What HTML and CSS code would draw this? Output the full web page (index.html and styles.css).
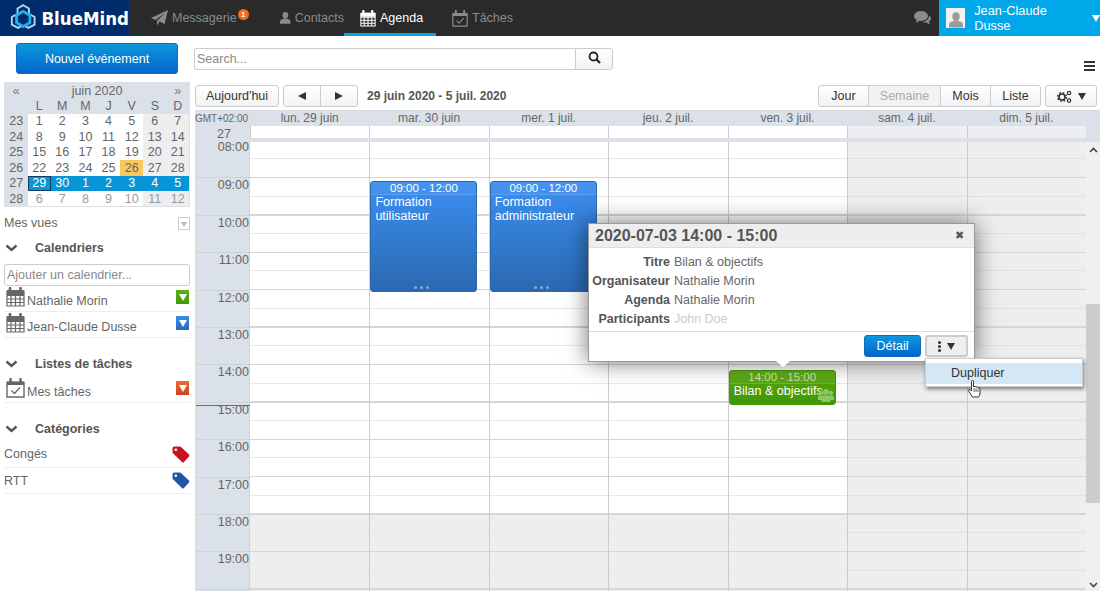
FILE: index.html
```html
<!DOCTYPE html>
<html lang="fr">
<head>
    <meta charset="UTF-8">
    <title>BlueMind - Agenda</title>
    <link rel="stylesheet" href="styles.css">
</head>
<body>
    <svg class="defs" width="0" height="0">
        <symbol id="cal" viewBox="0 0 19 20">
            <path d="M1 4h17v15H1z M1 8.5h17 M1 12h17 M1 15.500h17 M5 8.500V19 M9.500 8.500V19 M14 8.500V19" fill="none" stroke="currentColor" stroke-width="1.200"/>
            <path d="M1 3h17v5H1z" fill="currentColor"/>
            <path d="M4 1v4 M14.500 1v4" stroke="currentColor" stroke-width="2.600" stroke-linecap="round"/>
        </symbol>
        <symbol id="task" viewBox="0 0 19 20">
            <path d="M1 4.500h17v14.500H1z" fill="none" stroke="currentColor" stroke-width="1.400"/>
            <path d="M1 3.500h17v3.500H1z" fill="currentColor"/>
            <path d="M4.500 1v4 M14.500 1v4" stroke="currentColor" stroke-width="2.400" stroke-linecap="round"/>
            <path d="M5.500 12.500l3 3 5.500-6" fill="none" stroke="currentColor" stroke-width="1.300"/>
        </symbol>
        <symbol id="tag" viewBox="0 0 18 17">
            <path d="M0.500 2.500Q0.500 0.500 2.500 0.500H7.500Q8.500 0.500 9.200 1.200L17 8.500Q17.800 9.500 17 10.500L12 16Q11 17 10 16L1.200 7.500Q0.500 6.800 0.500 6Z" fill="currentColor"/>
            <circle cx="3.800" cy="3.800" r="1.300" fill="#fff"/>
        </symbol>
        <symbol id="person" viewBox="0 0 14 16">
            <ellipse cx="7" cy="4.500" rx="3.700" ry="4.300" fill="currentColor"/>
            <path d="M0 15.500V12.500Q0 10 3 9.500L5 8.500H9L11 9.500Q14 10 14 12.500V15.500Z" fill="currentColor"/>
        </symbol>
    </svg>

    <header class="topbar">
        <a class="logo">
            <svg width="30" height="30" viewBox="0 0 30 30">
                <path d="M15 1.500L21 5V10.500L27 14V22L20.500 25.500L15 22.500L9.500 25.500L3 22V14L9 10.500V5Z" fill="none" stroke="#a8dcf2" stroke-width="2"/>
                <path d="M15 8L22 12V20L15 24L8 20V12Z" fill="#012c6c" stroke="#26aeea" stroke-width="3"/>
            </svg>
            <span class="logo-text">BlueMind</span>
        </a>
        <nav class="tabs">
            <a class="tab tab-mail">
                <svg width="17" height="16" viewBox="0 0 17 16"><path d="M17 0L13.500 14L8.500 11.500L6 15.500V11L14 3L4.500 10L0 8Z" fill="currentColor"/></svg>
                Messagerie<span class="badge">1</span>
            </a>
            <a class="tab tab-contacts">
                <svg width="14" height="16"><use href="#person"/></svg>
                Contacts
            </a>
            <a class="tab tab-agenda active">
                <svg width="16" height="17"><use href="#cal"/></svg>
                Agenda
            </a>
            <a class="tab tab-tasks">
                <svg width="16" height="17"><use href="#task"/></svg>
                Tâches
            </a>
        </nav>
        <svg class="chat" width="17" height="14" viewBox="0 0 17 14">
            <ellipse cx="7" cy="5" rx="7" ry="5" fill="currentColor"/>
            <path d="M3 8L2 12L7 9Z" fill="currentColor"/>
            <path d="M15.500 4.500Q17 6 17 7.500Q17 9.500 15 10.500L16 13.500L12 11.500Q9.500 11.500 8 11Q14 11 15.500 4.500Z" fill="currentColor"/>
        </svg>
        <div class="user">
            <span class="avatar"><svg width="14" height="16"><use href="#person"/></svg></span>
            <span class="user-name">Jean-Claude Dusse</span>
            <span class="user-arrow"></span>
        </div>
    </header>

    <div class="page">
        <aside class="sidebar">
            <div class="new-wrap"><button class="btn-primary btn-new">Nouvel événement</button></div>

            <table class="mini">
                <tr class="mini-title"><td class="nav">«</td><td colspan="6">juin 2020</td><td class="nav">»</td></tr>
                <tr class="mini-days"><td></td><td>L</td><td>M</td><td>M</td><td>J</td><td>V</td><td>S</td><td>D</td></tr>
                <tr><th>23</th><td>1</td><td>2</td><td>3</td><td>4</td><td>5</td><td class="we">6</td><td class="we">7</td></tr>
                <tr><th>24</th><td>8</td><td>9</td><td>10</td><td>11</td><td>12</td><td class="we">13</td><td class="we">14</td></tr>
                <tr><th>25</th><td>15</td><td>16</td><td>17</td><td>18</td><td>19</td><td class="we">20</td><td class="we">21</td></tr>
                <tr><th>26</th><td>22</td><td>23</td><td>24</td><td>25</td><td class="today">26</td><td class="we">27</td><td class="we">28</td></tr>
                <tr class="sel"><th>27</th><td class="focus">29</td><td>30</td><td>1</td><td>2</td><td>3</td><td>4</td><td>5</td></tr>
                <tr class="other"><th>28</th><td>6</td><td>7</td><td>8</td><td>9</td><td>10</td><td class="we">11</td><td class="we">12</td></tr>
            </table>

            <div class="views">Mes vues <span class="views-btn"></span></div>

            <h3 class="side-title first"><svg class="chev" width="13" height="8" viewBox="0 0 13 8"><path d="M1.500 1.500L6.500 6L11.500 1.500" fill="none" stroke="currentColor" stroke-width="2.400"/></svg>Calendriers</h3>
            <input class="add-cal" placeholder="Ajouter un calendrier...">
            <div class="side-row cal-row">
                <svg class="row-icon" width="19" height="20"><use href="#cal"/></svg>
                <span class="row-label">Nathalie Morin</span>
                <span class="swatch green"></span>
            </div>
            <div class="side-row cal-row">
                <svg class="row-icon" width="19" height="20"><use href="#cal"/></svg>
                <span class="row-label">Jean-Claude Dusse</span>
                <span class="swatch blue"></span>
            </div>

            <h3 class="side-title"><svg class="chev" width="13" height="8" viewBox="0 0 13 8"><path d="M1.500 1.500L6.500 6L11.500 1.500" fill="none" stroke="currentColor" stroke-width="2.400"/></svg>Listes de tâches</h3>
            <div class="side-row cal-row">
                <svg class="row-icon" width="19" height="20"><use href="#task"/></svg>
                <span class="row-label">Mes tâches</span>
                <span class="swatch orange"></span>
            </div>

            <h3 class="side-title"><svg class="chev" width="13" height="8" viewBox="0 0 13 8"><path d="M1.500 1.500L6.500 6L11.500 1.500" fill="none" stroke="currentColor" stroke-width="2.400"/></svg>Catégories</h3>
            <div class="side-row tag-row">
                <span class="tag-label">Congés</span>
                <svg class="tag red" width="18" height="17"><use href="#tag"/></svg>
            </div>
            <div class="side-row tag-row">
                <span class="tag-label">RTT</span>
                <svg class="tag navy" width="18" height="17"><use href="#tag"/></svg>
            </div>
        </aside>

        <main class="main">
            <div class="search-bar">
                <input class="search" placeholder="Search...">
                <button class="btn search-btn">
                    <svg width="13" height="13" viewBox="0 0 13 13"><circle cx="5.500" cy="5.500" r="4" fill="none" stroke="#222" stroke-width="1.800"/><path d="M8.500 8.500L12 12" stroke="#222" stroke-width="2.200"/></svg>
                </button>
                <span class="burger"></span>
            </div>

            <div class="toolbar">
                <button class="btn btn-today">Aujourd'hui</button>
                <div class="group">
                    <button class="btn btn-nav"><span class="tri-left"></span></button>
                    <button class="btn btn-nav"><span class="tri-right"></span></button>
                </div>
                <span class="range">29 juin 2020 - 5 juil. 2020</span>
                <div class="group group-views">
                    <button class="btn btn-jour">Jour</button>
                    <button class="btn btn-semaine">Semaine</button>
                    <button class="btn btn-mois">Mois</button>
                    <button class="btn btn-liste">Liste</button>
                </div>
                <button class="btn btn-settings">
                    <svg width="15" height="13" viewBox="0 0 15 13">
                        <circle cx="5" cy="7" r="3" fill="none" stroke="#333" stroke-width="1.600"/>
                        <circle cx="5" cy="7" r="4.300" fill="none" stroke="#333" stroke-width="1.600" stroke-dasharray="1.700 1.700"/>
                        <circle cx="12" cy="3" r="1.700" fill="none" stroke="#333" stroke-width="1.200"/>
                        <circle cx="12" cy="10.500" r="1.700" fill="none" stroke="#333" stroke-width="1.200"/>
                    </svg>
                    <span class="tri-down"></span>
                </button>
            </div>

            <section class="calendar">
                <div class="cal-head">
                    <div class="tz">GMT+02:00</div>
                    <div class="dow">lun. 29 juin</div>
                    <div class="dow">mar. 30 juin</div>
                    <div class="dow">mer. 1 juil.</div>
                    <div class="dow">jeu. 2 juil.</div>
                    <div class="dow">ven. 3 juil.</div>
                    <div class="dow">sam. 4 juil.</div>
                    <div class="dow">dim. 5 juil.</div>
                    <div class="wk">27</div>
                    <div class="allday"></div>
                    <div class="allday"></div>
                    <div class="allday"></div>
                    <div class="allday"></div>
                    <div class="allday"></div>
                    <div class="allday off"></div>
                    <div class="allday off"></div>
                </div>

                <div class="cal-body">
                    <div class="cal-grid">
                        <div class="hours">
                            <div class="hour">08:00</div>
                            <div class="hour">09:00</div>
                            <div class="hour">10:00</div>
                            <div class="hour">11:00</div>
                            <div class="hour">12:00</div>
                            <div class="hour">13:00</div>
                            <div class="hour">14:00</div>
                            <div class="hour">15:00</div>
                            <div class="hour">16:00</div>
                            <div class="hour">17:00</div>
                            <div class="hour">18:00</div>
                            <div class="hour">19:00</div>
                            <div class="hour">20:00</div>
                            <span class="now"></span>
                        </div>
                        <div class="day"></div>
                        <div class="day">
                            <div class="event event-blue event-morning">
                                <div class="event-time">09:00 - 12:00</div>
                                <div class="event-title">Formation utilisateur</div>
                                <span class="event-dots"></span>
                            </div>
                        </div>
                        <div class="day">
                            <div class="event event-blue event-morning">
                                <div class="event-time">09:00 - 12:00</div>
                                <div class="event-title">Formation administrateur</div>
                                <span class="event-dots"></span>
                            </div>
                        </div>
                        <div class="day"></div>
                        <div class="day">
                            <div class="event event-green">
                                <div class="event-time">14:00 - 15:00</div>
                                <div class="event-title">Bilan &amp; objectifs</div>
                                <svg class="event-people" width="16" height="13" viewBox="0 0 16 13">
                                    <circle cx="3" cy="4" r="2.200" fill="currentColor"/>
                                    <circle cx="13" cy="4" r="2.200" fill="currentColor"/>
                                    <circle cx="8" cy="3" r="3" fill="currentColor"/>
                                    <path d="M0 11V8Q0 6.500 2 6.500H14Q16 6.500 16 8V11H12.500V13H3.500V11Z" fill="currentColor"/>
                                </svg>
                            </div>
                        </div>
                        <div class="day weekend"></div>
                        <div class="day weekend"></div>
                    </div>
                    <div class="scrollbar">
                        <svg width="9" height="6" viewBox="0 0 9 6"><path d="M1 5L4.500 1.500L8 5" fill="none" stroke="#444" stroke-width="1.600"/></svg>
                        <span class="thumb"></span>
                        <svg class="scroll-down" width="9" height="6" viewBox="0 0 9 6"><path d="M1 1L4.500 4.500L8 1" fill="none" stroke="#444" stroke-width="1.600"/></svg>
                    </div>
                </div>
            </section>
        </main>
    </div>

    <div class="popover">
        <div class="pop-head">
            <span class="pop-title">2020-07-03 14:00 - 15:00</span>
            <span class="pop-close">✖</span>
        </div>
        <div class="pop-body">
            <div class="pop-label">Titre</div><div>Bilan &amp; objectifs</div>
            <div class="pop-label">Organisateur</div><div>Nathalie Morin</div>
            <div class="pop-label">Agenda</div><div>Nathalie Morin</div>
            <div class="pop-label">Participants</div><div class="muted">John Doe</div>
        </div>
        <div class="pop-foot">
            <button class="btn-primary btn-detail">Détail</button>
            <button class="btn btn-more">
                <span class="kebab"></span>
                <span class="tri-down"></span>
            </button>
        </div>
        <span class="pop-arrow"></span>
    </div>

    <div class="menu">
        <div class="menu-item">Dupliquer</div>
    </div>
    <svg class="hand" width="13" height="18" viewBox="0 0 13 18">
        <path d="M3.500 1.500Q3.500 0.500 4.500 0.500Q5.500 0.500 5.500 1.500V7L6 6.500Q7.500 6 8 7Q9.500 6.500 10 7.800Q11.500 7.500 12 9V13Q12 15 10.500 17H4.500L1 11.500Q0 10 1 9.500Q2 9 3.500 11Z" fill="#fff" stroke="#222" stroke-width="0.900"/>
        <path d="M6 8v4 M8 8v4 M10 9v3" stroke="#222" stroke-width="0.700"/>
    </svg>
</body>
</html>
```
FILE: styles.css
```css
* {
    box-sizing: border-box;
}

html, body {
    height: 591px;
    overflow: hidden;
}

body {
    margin: 0;
    font-family: "Liberation Sans", Arial, sans-serif;
    font-size: 12px;
    color: #666;
    background: #fff;
    position: relative;
}

button, input {
    font-family: inherit;
}

.defs {
    position: absolute;
}

/* top bar */
.topbar {
    display: flex;
    align-items: center;
    height: 36px;
    background: #2a2a2a;
}

.logo {
    display: flex;
    align-items: center;
    gap: 4px;
    width: 129px;
    height: 36px;
    padding-left: 9px;
    background: #012c6c;
    flex: none;
}

.logo-text {
    font-family: "DejaVu Sans", sans-serif;
    font-stretch: condensed;
    font-weight: bold;
    font-size: 18.500px;
    color: #fff;
}

.tabs {
    display: flex;
    height: 36px;
    margin-left: 6px;
}

.tab {
    display: flex;
    align-items: center;
    gap: 4px;
    height: 36px;
    font-size: 12.500px;
    color: #8b8b8b;
    padding-left: 16px;
}

.tab svg {
    color: #8b8b8b;
}

.tab-mail {
    width: 129px;
}

.tab-contacts {
    width: 80px;
}

.tab-agenda {
    width: 92px;
    margin-right: 0;
}

.tab-tasks {
    width: 100px;
}

.tab.active {
    color: #fff;
    border-bottom: 3px solid #00a8ea;
    padding-top: 3px;
}

.tab.active svg {
    color: #fff;
}

.badge {
    width: 11px;
    height: 11px;
    border-radius: 50%;
    background: #f26a1b;
    color: #fff;
    font-size: 8px;
    font-weight: bold;
    line-height: 11px;
    text-align: center;
    margin: -8px 0 0 -3px;
}

.chat {
    color: #8b8b8b;
    margin: 0 8px 0 auto;
}

.user {
    display: flex;
    align-items: center;
    width: 161px;
    height: 36px;
    padding-left: 7px;
    background: #00a8ea;
    color: #fff;
}

.avatar {
    display: flex;
    align-items: flex-end;
    justify-content: center;
    width: 20px;
    height: 20px;
    background: #f2f2f2;
    color: #9a9a9a;
    margin-right: 9px;
}

.user-name {
    font-size: 12.800px;
}

.user-arrow {
    width: 0;
    height: 0;
    margin-left: 10px;
    border-left: 4px solid transparent;
    border-right: 4px solid transparent;
    border-top: 7px solid #fff;
}

/* page */
.page {
    display: flex;
}

.sidebar {
    width: 194px;
    flex: none;
    padding-left: 4px;
    padding-right: 4px;
}

.btn-primary {
    border: 1px solid #0b6cc0;
    border-radius: 3px;
    background: linear-gradient(#0f97dc, #0066cc);
    color: #fff;
    font-size: 12.500px;
}

.new-wrap {
    padding: 7px 12px 8px;
}

.btn-new {
    display: block;
    width: 162px;
    height: 31px;
}

/* mini calendar */
.mini {
    width: 186px;
    height: 124px;
    border-collapse: collapse;
    table-layout: fixed;
    background: #dbe1e8;
    font-size: 12.500px;
    text-align: center;
    border: 1px solid #dbe1e8;
}

.mini td, .mini th {
    padding: 0;
    height: 15.500px;
    font-weight: normal;
    line-height: 14px;
    background: #fff;
}

.mini th {
    width: 26px;
    background: #dbe1e8;
}

.mini tr.mini-title td, .mini tr.mini-days td {
    background: #dbe1e8;
}

.mini .nav {
    color: #777;
}

.mini td.we {
    background: #eee;
}

.mini td.today {
    background: #f8c85c;
}

.mini tr.sel td {
    background: #0795d8;
    color: #fff;
}

.mini tr.sel td.focus {
    outline: 1px solid #123a5a;
    outline-offset: -1px;
}

.mini tr.other td {
    color: #999;
}

.views {
    display: flex;
    justify-content: space-between;
    align-items: center;
    height: 14px;
    margin-top: 9px;
    font-size: 12.500px;
}

.views-btn {
    position: relative;
    width: 12px;
    height: 13px;
    border: 1px solid #ccc;
}

.views-btn::after {
    content: "";
    position: absolute;
    top: 4px;
    left: 2px;
    border-left: 3px solid transparent;
    border-right: 3px solid transparent;
    border-top: 5px solid #bbb;
}

.side-title {
    display: flex;
    align-items: center;
    margin: 0;
    height: 15px;
    margin-top: 18px;
    font-size: 12.500px;
    font-weight: bold;
    color: #555;
}

.side-title.first {
    margin-top: 10px;
}

.chev {
    width: 13px;
    margin: 0 17px 0 1px;
}

.add-cal {
    display: block;
    width: 186px;
    height: 22px;
    margin-top: 9px;
    padding: 0 2px;
    border: 1px solid #ccc;
    border-radius: 3px;
    font-size: 12.500px;
}

.add-cal::placeholder, .search::placeholder {
    color: #8a8a8a;
    opacity: 1;
}

.side-row {
    display: flex;
    align-items: center;
    border-bottom: 1px solid #eee;
}

.cal-row {
    height: 26px;
    margin-bottom: 0;
}

.row-icon {
    color: #666;
    margin: -4px 2px 0 2px;
}

.row-label {
    font-size: 12.500px;
    margin-top: 4px;
}

.swatch {
    position: relative;
    width: 13px;
    height: 14px;
    margin-left: auto;
    margin-right: 1px;
    margin-top: -3px;
}

.swatch::after {
    content: "";
    position: absolute;
    left: 2.500px;
    top: 4px;
    border-left: 4px solid transparent;
    border-right: 4px solid transparent;
    border-top: 7px solid #fff;
}

.swatch.green {
    background: linear-gradient(#5fb010, #3f9a05);
}

.swatch.blue {
    background: linear-gradient(#3a8de8, #2a6bb5);
}

.swatch.orange {
    background: linear-gradient(#f06a30, #c8451f);
}

.side-title + .cal-row {
    margin-top: 6px;
}

.tag-row {
    justify-content: space-between;
    height: 26px;
    font-size: 12.500px;
}

.side-title + .tag-row {
    margin-top: 5px;
    height: 27px;
}

.tag.red {
    color: #c4141f;
}

.tag.navy {
    color: #1f56a8;
}

/* toolbars */
.main {
    width: 906px;
}

.search-bar {
    display: flex;
    align-items: flex-start;
    height: 47px;
    padding-top: 12px;
}

.search {
    width: 381px;
    height: 22px;
    padding: 0 2px;
    border: 1px solid #ccc;
    border-right: none;
    border-radius: 3px 0 0 3px;
    font-size: 12.500px;
}

.btn {
    border: 1px solid #ccc;
    border-radius: 3px;
    background: linear-gradient(#fff, #f2f2f2);
    color: #333;
    font-size: 12.500px;
    padding: 0;
    height: 22px;
}

.search-btn {
    width: 38px;
    border-radius: 0 3px 3px 0;
}

.burger {
    width: 11px;
    height: 10px;
    margin: 13px 0 0 auto;
    margin-right: 5px;
    border-top: 2px solid #333;
    border-bottom: 2px solid #333;
    position: relative;
}

.burger::after {
    content: "";
    position: absolute;
    left: 0;
    right: 0;
    top: 2px;
    height: 2px;
    background: #333;
}

.toolbar {
    display: flex;
    align-items: center;
    height: 26px;
    padding-left: 1px;
}

.btn-today {
    width: 84px;
    margin-right: 4px;
}

.group {
    display: flex;
}

.group .btn {
    border-radius: 0;
    margin-left: -1px;
}

.group .btn:first-child {
    border-radius: 3px 0 0 3px;
    margin-left: 0;
}

.group .btn:last-child {
    border-radius: 0 3px 3px 0;
}

.btn-nav {
    display: flex;
    align-items: center;
    justify-content: center;
    width: 38px;
}

.tri-left, .tri-right {
    width: 0;
    height: 0;
    border-top: 4px solid transparent;
    border-bottom: 4px solid transparent;
}

.tri-left {
    border-right: 8px solid #333;
}

.tri-right {
    border-left: 8px solid #333;
}

.tri-down {
    display: inline-block;
    width: 0;
    height: 0;
    border-left: 4px solid transparent;
    border-right: 4px solid transparent;
    border-top: 7px solid #333;
}

.range {
    margin-left: 9px;
    font-weight: bold;
    color: #555;
}

.group-views {
    margin-left: auto;
}

.btn-jour {
    width: 51px;
}

.btn-semaine {
    width: 73px;
    color: #aaa;
    background: #f2f2f2;
}

.btn-mois {
    width: 51px;
}

.btn-liste {
    width: 51px;
}

.btn-settings {
    display: flex;
    align-items: center;
    justify-content: center;
    gap: 6px;
    width: 52px;
    margin-left: 4px;
    margin-right: 3px;
}

/* calendar */
.calendar {
    margin-top: 1px;
    margin-left: 1px;
    border-top: 1px solid #d5dbe1;
}

.cal-head {
    display: grid;
    grid-template-columns: 55px repeat(7, 1fr);
    grid-template-rows: 15px 16px;
    height: 31px;
    padding-right: 14px;
    background: #dbe1e8;
}

.tz {
    font-size: 10px;
    line-height: 15px;
    padding-left: 0;
    white-space: nowrap;
}

.dow {
    text-align: center;
    line-height: 15px;
    font-size: 12px;
}

.wk {
    text-align: center;
    line-height: 16px;
    font-size: 12.500px;
    padding-left: 3px;
}

.allday {
    height: 12px;
    background: #fff;
    border-left: 1px solid #ccc;
}

.allday.off {
    background: #eee;
}

.cal-body {
    display: flex;
    height: 450px;
    overflow: hidden;
}

.cal-grid {
    display: grid;
    grid-template-columns: 55px repeat(7, 1fr);
    width: 891px;
}

.hours {
    position: relative;
    background: #dbe1e8;
    border-left: 1px solid #ddd;
    border-right: 1px solid #ccd3da;
    margin-top: -2px;
}

.hour {
    height: 37.400px;
    padding-top: 0;
    padding-right: 0;
    font-size: 12.500px;
    line-height: 15px;
    text-align: right;
    border-top: 1px solid #cfd3d8;
}

.hour:first-child {
    border-top: none;
}

.now {
    position: absolute;
    left: 0;
    right: -1px;
    top: 265px;
    height: 1px;
    background: #e8323c;
}

.day {
    position: relative;
    border-left: 1px solid #ccc;
    background-color: #fff;
    background-image:
        repeating-linear-gradient(
            transparent 0, transparent 16.200px,
            #e9e9e9 16.200px, #e9e9e9 17.200px,
            transparent 17.200px, transparent 34.800px,
            #d6d6d6 34.800px, #d6d6d6 36.200px,
            transparent 36.200px, transparent 37.400px
        ),
        linear-gradient(#fff 371.500px, #eee 371.500px);
}

.day:nth-child(2) {
    border-left: none;
}

.day.weekend {
    background-image:
        repeating-linear-gradient(
            transparent 0, transparent 16.200px,
            #e2e2e2 16.200px, #e2e2e2 17.200px,
            transparent 17.200px, transparent 34.800px,
            #d6d6d6 34.800px, #d6d6d6 36.200px,
            transparent 36.200px, transparent 37.400px
        );
    background-color: #eee;
}

.event {
    position: absolute;
    left: 0;
    width: 107px;
    border-radius: 3px;
    color: #fff;
    overflow: hidden;
}

.event-blue {
    background: linear-gradient(#3c8ff2, #2a69b0);
    border: 1px solid #2a69b0;
}

.event-morning {
    top: 39px;
    height: 111px;
}

.event-green {
    top: 228px;
    height: 35px;
    background: linear-gradient(#5aa80d, #3f9804);
    border: 1px solid #3f9804;
}

.event-time {
    height: 13px;
    text-align: center;
    font-size: 11.500px;
    line-height: 13px;
    border-bottom: 1px solid rgba(255, 255, 255, 0.15);
    background: rgba(255, 255, 255, 0.05);
}

.event-green .event-time {
    color: #cfe6b0;
}

.event-title {
    padding: 1px 4px;
    font-size: 12.500px;
    line-height: 13.500px;
}

.event-dots {
    position: absolute;
    bottom: 2px;
    left: 43px;
    width: 3px;
    height: 3px;
    border-radius: 50%;
    background: #85a9d8;
    box-shadow: 6px 0 #85a9d8, 12px 0 #85a9d8;
}

.event-people {
    position: absolute;
    right: 1px;
    bottom: 2px;
    color: #8fc668;
}

.scrollbar {
    position: relative;
    display: flex;
    flex-direction: column;
    align-items: center;
    width: 14px;
    padding-top: 5px;
    background: #f0f0f0;
}

.thumb {
    position: absolute;
    left: 0;
    top: 162px;
    width: 14px;
    height: 199px;
    background: #cdcdcd;
}

.scroll-down {
    position: absolute;
    top: 440px;
}

/* event popover */
.popover {
    position: absolute;
    left: 588px;
    top: 223px;
    width: 387px;
    height: 139px;
    background: #fff;
    border: 1px solid #9a9a9a;
    box-shadow: 0 0 22px rgba(0, 0, 0, 0.55);
}

.pop-head {
    display: flex;
    justify-content: space-between;
    align-items: center;
    height: 24px;
    padding: 0 10px 0 6px;
    background: #eee;
    border-bottom: 1px solid #ddd;
}

.pop-title {
    font-size: 16px;
    font-weight: bold;
    color: #555;
}

.pop-close {
    font-size: 11px;
    color: #555;
}

.pop-body {
    display: grid;
    grid-template-columns: 81px 1fr;
    column-gap: 4px;
    grid-auto-rows: 19px;
    align-items: center;
    height: 84px;
    padding-top: 4px;
    font-size: 12.500px;
    border-bottom: 1px solid #ddd;
}

.pop-label {
    text-align: right;
    font-weight: bold;
    color: #555;
}

.muted {
    color: #ccc;
}

.pop-foot {
    display: flex;
    justify-content: flex-end;
    gap: 4px;
    padding: 3px 6px 0 0;
}

.btn-detail {
    width: 57px;
    height: 22px;
}

.btn-more {
    display: flex;
    align-items: center;
    justify-content: center;
    gap: 6px;
    width: 43px;
    background: #eee;
    border-width: 2px;
}

.kebab {
    width: 3px;
    height: 3px;
    background: #333;
    border-radius: 50%;
    box-shadow: 0 4px #333, 0 -4px #333;
}

.pop-arrow {
    position: absolute;
    left: 187px;
    top: 137px;
    width: 0;
    height: 0;
    border-left: 7px solid transparent;
    border-right: 7px solid transparent;
    border-top: 6px solid #fff;
}

.menu {
    position: absolute;
    left: 925px;
    top: 358px;
    width: 158px;
    height: 29px;
    padding: 4px 0;
    background: #fff;
    border: 1px solid #ccc;
    box-shadow: 1px 2px 4px rgba(0, 0, 0, 0.5);
}

.menu-item {
    height: 21px;
    padding-left: 25px;
    background: #d5e6f5;
    color: #333;
    font-size: 12.500px;
    line-height: 21px;
}

.hand {
    position: absolute;
    left: 968px;
    top: 380px;
}
```
